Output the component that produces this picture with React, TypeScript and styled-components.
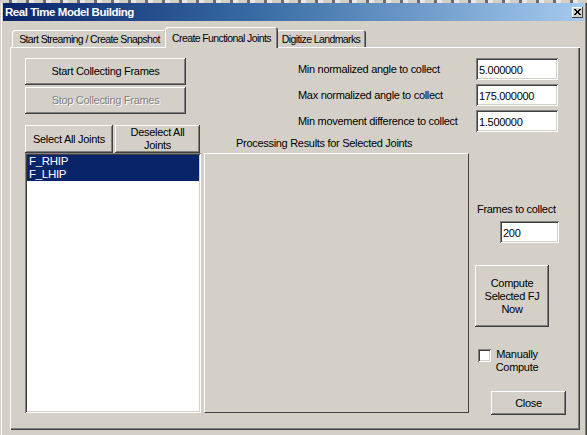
import styled, { createGlobalStyle, css } from "styled-components";

const GlobalStyle = createGlobalStyle`
  html, body {
    margin: 0;
    padding: 0;
    background: #d4d0c8;
  }
  body {
    font-family: "Liberation Sans", Arial, sans-serif;
    font-size: 11px;
    letter-spacing: -0.3px;
    color: #000;
  }
`;

// classic win2k 3d edges
const raised = css`
  box-shadow: inset -1px -1px #404040, inset 1px 1px #fff,
    inset -2px -2px #808080, inset 2px 2px #d4d0c8;
`;

const sunken = css`
  box-shadow: inset 1px 1px #808080, inset -1px -1px #fff,
    inset 2px 2px #404040, inset -2px -2px #d4d0c8;
`;

export default function App() {
  return (
    <>
      <GlobalStyle />
      <Screen>
        <TopStrip />
        <Frame>
          <TitleBar>
            <span>Real Time Model Building</span>
            <CloseBox>
              <svg width="7" height="6" viewBox="0 0 7 6">
                <path d="M0 0 L6 6 M1 0 L7 6 M6 0 L0 6 M7 0 L1 6" stroke="#000" strokeWidth="1" />
              </svg>
            </CloseBox>
          </TitleBar>

          <Content>
            <TabRow>
              <Tab $width={155}>Start Streaming / Create Snapshot</Tab>
              <Tab $width={113} $active>
                Create Functional Joints
              </Tab>
              <Tab $width={90}>Digitize Landmarks</Tab>
            </TabRow>

            <Panel>
              <LeftCol>
                <Button $width={161} $height={27}>
                  Start Collecting Frames
                </Button>
                <Button $width={161} $height={27} $disabled style={{ marginTop: 2 }}>
                  Stop Collecting Frames
                </Button>
                <JointButtons>
                  <Button $width={88} $height={28}>
                    Select All Joints
                  </Button>
                  <Button $width={85} $height={28}>
                    Deselect All
                    <br />
                    Joints
                  </Button>
                </JointButtons>
                <ListBox>
                  <ListItem $selected>F_RHIP</ListItem>
                  <ListItem $selected>F_LHIP</ListItem>
                </ListBox>
              </LeftCol>

              <RightArea>
                <Fields>
                  <FieldLabel>Min normalized angle to collect</FieldLabel>
                  <TextBox readOnly value="5.000000" />
                  <FieldLabel>Max normalized angle to collect</FieldLabel>
                  <TextBox readOnly value="175.000000" />
                  <FieldLabel>Min movement difference to collect</FieldLabel>
                  <TextBox readOnly value="1.500000" />
                </Fields>

                <LowerRow>
                  <ResultsCol>
                    <Caption>Processing Results for Selected Joints</Caption>
                    <ResultsBox />
                  </ResultsCol>

                  <SideCol>
                    <FramesLabel>Frames to collect</FramesLabel>
                    <FramesBox readOnly value="200" />
                    <Button $width={74} $height={62} style={{ marginTop: 22 }}>
                      Compute
                      <br />
                      Selected FJ
                      <br />
                      Now
                    </Button>
                    <CheckRow>
                      <CheckBox />
                      <CheckLabel>
                        Manually
                        <br />
                        Compute
                      </CheckLabel>
                    </CheckRow>
                    <Button $width={75} $height={24} style={{ marginTop: 17, marginLeft: 16 }}>
                      Close
                    </Button>
                  </SideCol>
                </LowerRow>
              </RightArea>
            </Panel>
          </Content>
        </Frame>
      </Screen>
    </>
  );
}

const Screen = styled.div`
  width: 587px;
  height: 435px;
  overflow: hidden;
  background: #d4d0c8;
`;

const TopStrip = styled.div`
  height: 3px;
  background: repeating-linear-gradient(90deg, #d4d0c8 0 9px, #6b6b6b 9px 12px, #e8e8e8 12px 17px);
`;

const Frame = styled.div`
  height: 432px;
  padding: 0 3px;
  box-sizing: border-box;
  box-shadow: inset 1px 0 #d4d0c8, inset 2px 0 #fff, inset -1px 0 #404040,
    inset -2px 0 #808080;
`;

const TitleBar = styled.div`
  height: 18px;
  display: flex;
  align-items: center;
  justify-content: space-between;
  padding: 0 1px 0 2px;
  background: linear-gradient(90deg, #0a246a 0%, #3a6ea5 45%, #a6caf0 100%);
  color: #fff;
  font-weight: bold;
  font-size: 11.5px;
  letter-spacing: -0.45px;
`;

const CloseBox = styled.div`
  width: 11px;
  height: 11px;
  display: flex;
  align-items: center;
  justify-content: center;
  background: #d4d0c8;
  box-shadow: inset -1px -1px #404040, inset 1px 1px #fff;
`;

const Content = styled.div`
  padding: 6px 0 0 7px;
`;

const TabRow = styled.div`
  display: flex;
  align-items: flex-end;
  height: 20px;
  padding-left: 2px;
`;

const Tab = styled.div<{ $width: number; $active?: boolean }>`
  width: ${(p) => p.$width}px;
  height: ${(p) => (p.$active ? 21 : 17)}px;
  margin: ${(p) => (p.$active ? "0 -2px -1px -2px" : "0")};
  position: relative;
  z-index: ${(p) => (p.$active ? 1 : 0)};
  box-sizing: border-box;
  display: flex;
  align-items: center;
  justify-content: center;
  padding-top: ${(p) => (p.$active ? 0 : 1)}px;
  font-size: 10.5px;
  letter-spacing: -0.6px;
  background: #d4d0c8;
  border-radius: 3px 3px 0 0;
  white-space: nowrap;
  box-shadow: inset 1px 1px #fff, inset -1px 0 #404040, inset -2px 0 #808080;
`;

const Panel = styled.div`
  width: 570px;
  height: 383px;
  box-sizing: border-box;
  padding: 11px 0 0 15px;
  display: flex;
  box-shadow: inset 1px 1px #fff, inset -1px -1px #404040,
    inset -2px -2px #808080;
`;

const LeftCol = styled.div`
  width: 176px;
  display: flex;
  flex-direction: column;
`;

const Button = styled.div<{ $width: number; $height: number; $disabled?: boolean }>`
  width: ${(p) => p.$width}px;
  height: ${(p) => p.$height}px;
  flex: none;
  box-sizing: border-box;
  display: flex;
  align-items: center;
  justify-content: center;
  text-align: center;
  line-height: 13px;
  background: #d4d0c8;
  ${raised};
  color: ${(p) => (p.$disabled ? "#808080" : "#000")};
  text-shadow: ${(p) => (p.$disabled ? "1px 1px #fff" : "none")};
`;

const JointButtons = styled.div`
  display: flex;
  gap: 2px;
  margin-top: 11px;
`;

const ListBox = styled.div`
  width: 176px;
  height: 260px;
  box-sizing: border-box;
  padding: 2px;
  background: #fff;
  ${sunken};
`;

const ListItem = styled.div<{ $selected?: boolean }>`
  height: 13px;
  line-height: 12px;
  padding-left: 2px;
  font-size: 11.5px;
  background: ${(p) => (p.$selected ? "#0a246a" : "transparent")};
  color: ${(p) => (p.$selected ? "#fff" : "#000")};
`;

const RightArea = styled.div`
  margin-left: 3px;
  display: flex;
  flex-direction: column;
`;

const Fields = styled.div`
  display: grid;
  grid-template-columns: 178px 82px;
  grid-auto-rows: 22px;
  row-gap: 4px;
  padding-left: 94px;
  align-items: center;
`;

const FieldLabel = styled.div`
  white-space: nowrap;
`;

const TextBox = styled.input`
  width: 82px;
  height: 22px;
  box-sizing: border-box;
  border: none;
  outline: none;
  padding: 2px 0 0 3px;
  font-family: inherit;
  font-size: 11px;
  letter-spacing: -0.3px;
  background: #fff;
  ${sunken};
`;

const LowerRow = styled.div`
  display: flex;
`;

const ResultsCol = styled.div`
  width: 265px;
  display: flex;
  flex-direction: column;
`;

const Caption = styled.div`
  height: 21px;
  box-sizing: border-box;
  padding: 5px 0 0 32px;
  line-height: 13px;
  white-space: nowrap;
`;

const ResultsBox = styled.div`
  height: 260px;
  border-top: 1px solid #fff;
  border-left: 1px solid #fff;
  border-right: 1px solid #404040;
  border-bottom: 1px solid #404040;
  box-sizing: border-box;
`;

const SideCol = styled.div`
  width: 90px;
  margin-left: 6px;
  display: flex;
  flex-direction: column;
`;

const FramesLabel = styled.div`
  margin-top: 71px;
  padding-left: 2px;
  line-height: 13px;
  white-space: nowrap;
`;

const FramesBox = styled(TextBox)`
  width: 59px;
  margin: 5px 0 0 25px;
`;

const CheckRow = styled.div`
  display: flex;
  margin-top: 21px;
  margin-left: 3px;
`;

const CheckBox = styled.span`
  width: 13px;
  height: 13px;
  margin-top: 1px;
  box-sizing: border-box;
  background: #fff;
  ${sunken};
`;

const CheckLabel = styled.div`
  width: 52px;
  text-align: center;
  line-height: 13px;
`;
